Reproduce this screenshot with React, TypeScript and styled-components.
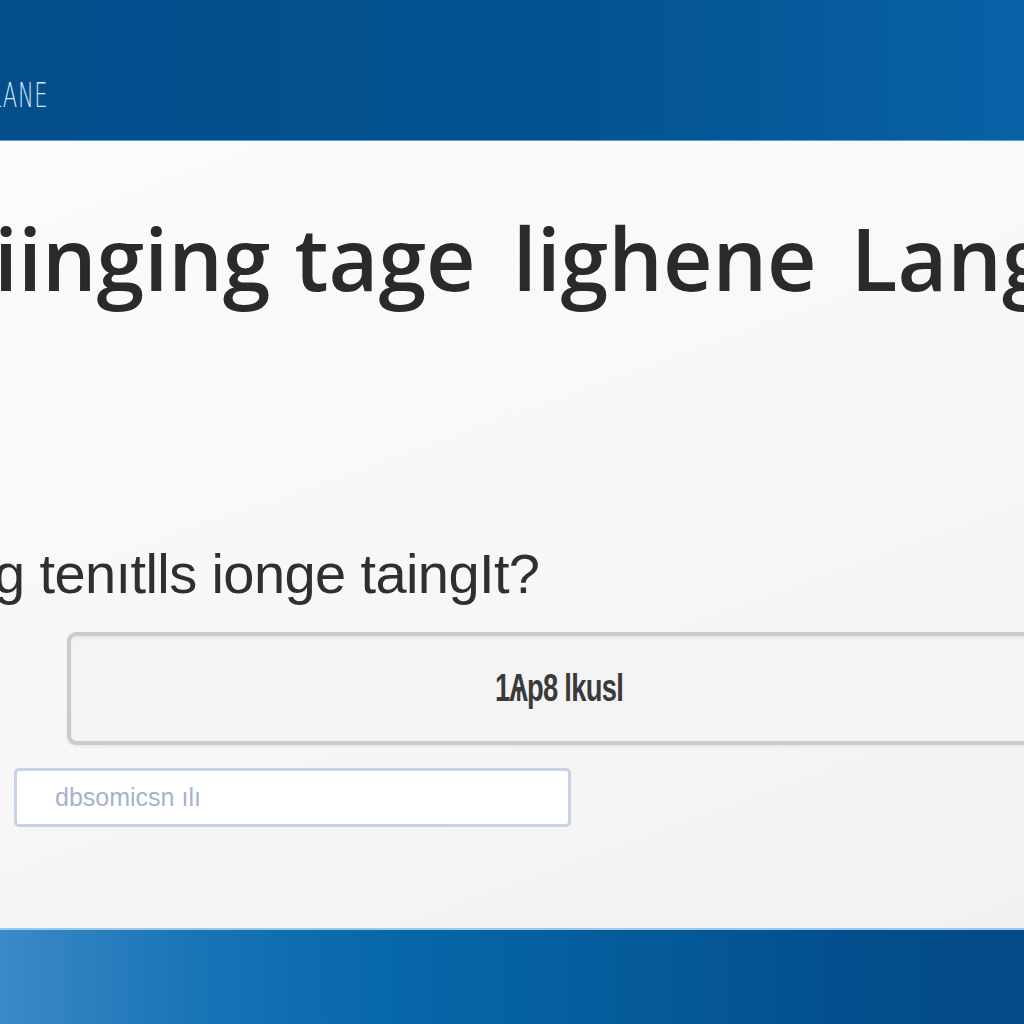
import styled, { createGlobalStyle } from "styled-components";

const GlobalStyle = createGlobalStyle`
  html, body {
    margin: 0;
    padding: 0;
    width: 1024px;
    height: 1024px;
    overflow: hidden;
    background: #f6f6f6;
  }
  #root {
    width: 1024px;
    height: 1024px;
  }
`;

const Page = styled.div`
  display: flex;
  flex-direction: column;
  width: 1024px;
  height: 1024px;
  overflow: hidden;
`;

const Header = styled.header`
  flex-shrink: 0;
  height: 141px;
  box-sizing: border-box;
  padding-top: 78px;
  background: linear-gradient(90deg, #044e8c 0%, #03528f 55%, #0862a6 100%);
  border-bottom: 1px solid #5d9fd3;
  overflow: hidden;
`;

const Brand = styled.span`
  display: inline-block;
  margin-left: -10px;
  font-family: "DejaVu Sans", sans-serif;
  font-weight: 200;
  font-size: 34px;
  line-height: 34px;
  letter-spacing: 1px;
  color: #d4e7f7;
  transform: scaleX(0.62);
  transform-origin: left center;
`;

const Panel = styled.main`
  flex: 1;
  display: flex;
  flex-direction: column;
  align-items: flex-start;
  background: linear-gradient(160deg, #fbfbfb 0%, #f7f7f7 55%, #f1f1f1 100%);
  overflow: hidden;
`;

const Title = styled.h1`
  display: flex;
  margin: 67px 0 0 -6px;
  font-family: "Open Sans", sans-serif;
  font-weight: 600;
  font-size: 86px;
  line-height: 100px;
  letter-spacing: 0;
  color: #2a2a2a;
  white-space: nowrap;
`;

const Word = styled.span<{ $lead: number }>`
  margin-left: ${(p) => p.$lead}px;
`;

const Question = styled.p`
  margin: 234px 0 0 -6px;
  font-family: "Liberation Sans", Arial, sans-serif;
  font-size: 56px;
  line-height: 64px;
  letter-spacing: -0.6px;
  color: #2f2f2f;
  white-space: nowrap;
`;

const BigField = styled.div`
  box-sizing: border-box;
  flex-shrink: 0;
  display: flex;
  align-items: center;
  justify-content: center;
  width: 984px;
  height: 113px;
  margin: 26px 0 0 67px;
  background: #f4f4f4;
  border: 4px solid #cbcbcb;
  border-radius: 9px;
  box-shadow: inset 0 2px 3px rgba(0, 0, 0, 0.06), 0 2px 3px rgba(0, 0, 0, 0.05);
`;

const BigValue = styled.span`
  display: inline-block;
  font-family: "Liberation Sans", Arial, sans-serif;
  font-weight: 700;
  font-size: 38px;
  letter-spacing: -1px;
  color: #3a3a3a;
  transform: scaleX(0.72);
`;

const SmallField = styled.div`
  box-sizing: border-box;
  flex-shrink: 0;
  display: flex;
  align-items: center;
  width: 557px;
  height: 59px;
  margin: 23px 0 0 14px;
  padding-left: 38px;
  background: #ffffff;
  border: 3px solid #c6d3e6;
  border-radius: 5px;
`;

const Placeholder = styled.span`
  font-family: "Liberation Sans", Arial, sans-serif;
  font-size: 25px;
  color: #a3b3cd;
`;

const Footer = styled.footer`
  flex-shrink: 0;
  height: 96px;
  box-sizing: border-box;
  border-top: 2px solid #9cc9ea;
  background: linear-gradient(
    90deg,
    #3c89c7 0%,
    #1a75b7 18%,
    #0667a9 38%,
    #055b9a 62%,
    #034f8d 82%,
    #034a86 100%
  );
`;

export default function App() {
  return (
    <>
      <GlobalStyle />
      <Page>
        <Header>
          <Brand>LANE</Brand>
        </Header>
        <Panel>
          <Title>
            <Word $lead={0}>iinging</Word>
            <Word $lead={24}>tage</Word>
            <Word $lead={37}>lighene</Word>
            <Word $lead={34}>Lang</Word>
          </Title>
          <Question>g tenıtlls ionge taingIt?</Question>
          <BigField>
            <BigValue>1Ѧp8 lkusl</BigValue>
          </BigField>
          <SmallField>
            <Placeholder>dbsomicsn ılı</Placeholder>
          </SmallField>
        </Panel>
        <Footer />
      </Page>
    </>
  );
}
